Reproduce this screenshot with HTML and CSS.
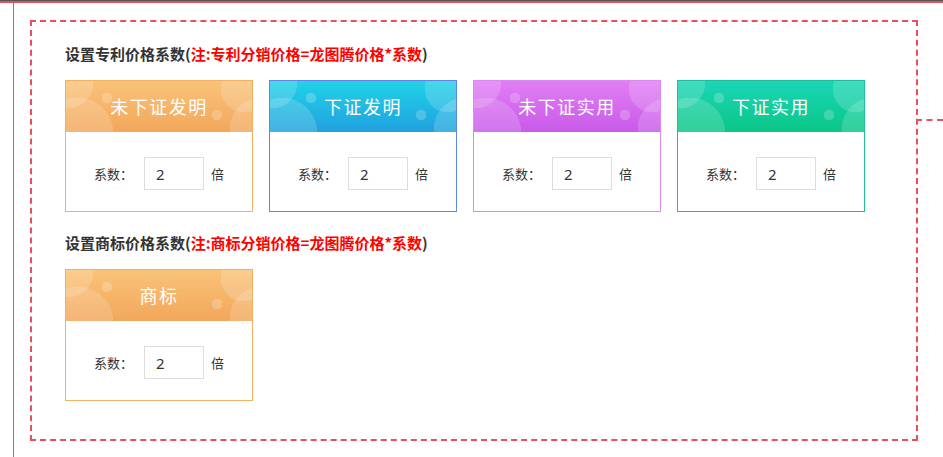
FILE: index.html
```html
<!DOCTYPE html>
<html lang="zh-CN">
<head>
  <meta charset="UTF-8" />
  <meta name="viewport" content="width=device-width, initial-scale=1.0"/>
  <title>价格系数设置</title>
  <link rel="stylesheet" href="styles.css">
</head>
<body>
  <div class="topbar"></div>
  <div class="page">
    <div class="panel">
      <h4 class="title">设置专利价格系数(<span class="note">注:专利分销价格=龙图腾价格*系数</span>)</h4>
      <div class="cards">
        <div class="card orange">
          <div class="card-head">未下证发明</div>
          <div class="card-body">
            <label>系数：</label>
            <input type="text" value="2"/>
            <span class="unit">倍</span>
          </div>
        </div>
        <div class="card blue">
          <div class="card-head">下证发明</div>
          <div class="card-body">
            <label>系数：</label>
            <input type="text" value="2"/>
            <span class="unit">倍</span>
          </div>
        </div>
        <div class="card purple">
          <div class="card-head">未下证实用</div>
          <div class="card-body">
            <label>系数：</label>
            <input type="text" value="2"/>
            <span class="unit">倍</span>
          </div>
        </div>
        <div class="card green">
          <div class="card-head">下证实用</div>
          <div class="card-body">
            <label>系数：</label>
            <input type="text" value="2"/>
            <span class="unit">倍</span>
          </div>
        </div>
      </div>

      <h4 class="title second">设置商标价格系数(<span class="note">注:商标分销价格=龙图腾价格*系数</span>)</h4>
      <div class="cards">
        <div class="card orange">
          <div class="card-head">商标</div>
          <div class="card-body">
            <label>系数：</label>
            <input type="text" value="2"/>
            <span class="unit">倍</span>
          </div>
        </div>
      </div>
    </div>
  </div>
</body>
</html>
```

FILE: styles.css
```css
body {
  font-family: "Noto Sans CJK SC", "Noto Sans", sans-serif;
  background: #fff;
  margin: 0;
  color: #333;
}
.topbar {
  height: 2px;
  border-top: 1px solid #555;
  background: #e2515d;
}
.page {
  margin-left: 13px;
  border-left: 1px solid #e2515d;
  height: 454px;
  padding-top: 17px;
  box-sizing: border-box;
}
.panel {
  position: relative;
  margin-left: 16px;
  width: 888px;
  height: 421px;
  box-sizing: border-box;
  border: 2px dashed #e9505d;
  padding: 21px 0 0 33px;
}
.panel::after {
  content: "";
  position: absolute;
  left: 100%;
  top: 97px;
  width: 27px;
  border-top: 2px dashed #e9505d;
}
.title {
  margin: 0;
  font-size: 15px;
  line-height: 22px;
  font-weight: bold;
  color: #333;
}
.title .note {
  color: #f00;
}
.title.second {
  margin-top: 20px;
}
.cards {
  display: flex;
  gap: 16px;
  margin-top: 15px;
}
.card {
  width: 188px;
  box-sizing: border-box;
  border: 1px solid #f3b163;
}
.card-head {
  height: 51px;
  line-height: 51px;
  text-align: center;
  color: #fff;
  font-size: 18px;
  letter-spacing: 1.5px;
}
.card-body {
  height: 79px;
  padding-top: 4px;
  box-sizing: border-box;
  display: flex;
  align-items: center;
  justify-content: center;
  font-size: 13px;
}
.card-body label {
  width: 50px;
}
.card-body input {
  width: 60px;
  height: 33px;
  box-sizing: border-box;
  border: 1px solid #ddd;
  padding: 0 11px;
  font-family: "Noto Sans", sans-serif;
  font-size: 15px;
  color: #333;
  outline: none;
}
.card-body .unit {
  margin-left: 7px;
}
.orange .card-head, .blue .card-head, .purple .card-head, .green .card-head {
  background-image:
    radial-gradient(circle at 2px 2px, rgba(255,255,255,.16) 25px, transparent 25.5px),
    radial-gradient(circle at 12px 52px, rgba(255,255,255,.16) 35px, transparent 35.5px),
    radial-gradient(circle at 41px 17px, rgba(255,255,255,.2) 5px, transparent 5.5px),
    radial-gradient(circle at 178px 8px, rgba(255,255,255,.16) 23px, transparent 23.5px),
    radial-gradient(circle at 195px 48px, rgba(255,255,255,.16) 31px, transparent 31.5px),
    radial-gradient(circle at 151px 34px, rgba(255,255,255,.2) 5px, transparent 5.5px),
    var(--grad);
}
.orange {
  border-color: #f3b163;
  --grad: linear-gradient(#f9c379, #f2a75b);
}
.blue {
  border-color: #5f86e7;
  --grad: linear-gradient(#22d2e7, #20a1df);
}
.purple {
  border-color: #d98af2;
  --grad: linear-gradient(#e17ef4, #c95ae9);
}
.green {
  border-color: #1cbf99;
  --grad: linear-gradient(#1ad6b8, #0bc685);
}
```
